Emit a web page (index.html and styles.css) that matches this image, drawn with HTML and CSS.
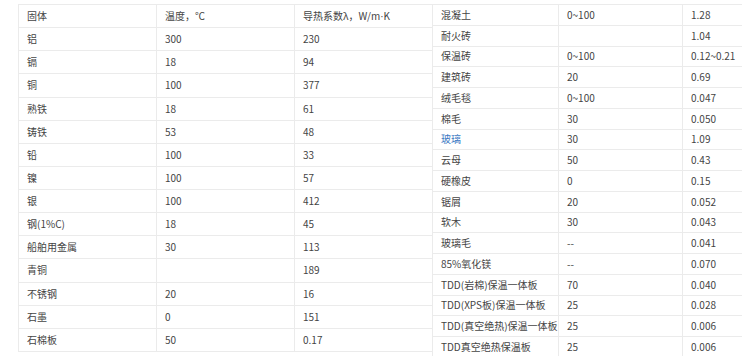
FILE: index.html
```html
<!DOCTYPE html>
<html lang="zh-CN">
<head>
<meta charset="utf-8">
<title>导热系数表</title>
<link rel="stylesheet" href="styles.css">
</head>
<body>
<div class="page">
  <div class="col col-left">
  <table class="tbl tbl-left">
    <colgroup><col class="c1"><col class="c2"><col class="c3"></colgroup>
    <tbody>
      <tr><td>固体</td><td>温度，℃</td><td>导热系数λ，W/m<span class="dot">·</span>K</td></tr>
      <tr><td>铝</td><td>300</td><td>230</td></tr>
      <tr><td>镉</td><td>18</td><td>94</td></tr>
      <tr><td>铜</td><td>100</td><td>377</td></tr>
      <tr><td>熟铁</td><td>18</td><td>61</td></tr>
      <tr><td>铸铁</td><td>53</td><td>48</td></tr>
      <tr><td>铅</td><td>100</td><td>33</td></tr>
      <tr><td>镍</td><td>100</td><td>57</td></tr>
      <tr><td>银</td><td>100</td><td>412</td></tr>
      <tr><td>钢(1%C)</td><td>18</td><td>45</td></tr>
      <tr><td>船舶用金属</td><td>30</td><td>113</td></tr>
      <tr><td>青铜</td><td></td><td>189</td></tr>
      <tr><td>不锈钢</td><td>20</td><td>16</td></tr>
      <tr><td>石墨</td><td>0</td><td>151</td></tr>
      <tr><td>石棉板</td><td>50</td><td>0.17</td></tr>
    </tbody>
  </table>
  </div>
  <div class="col col-right">
  <table class="tbl tbl-right">
    <colgroup><col class="r1"><col class="r2"><col class="r3"></colgroup>
    <tbody>
      <tr><td>混凝土</td><td>0~100</td><td>1.28</td></tr>
      <tr><td>耐火砖</td><td></td><td>1.04</td></tr>
      <tr><td>保温砖</td><td>0~100</td><td>0.12~0.21</td></tr>
      <tr><td>建筑砖</td><td>20</td><td>0.69</td></tr>
      <tr><td>绒毛毯</td><td>0~100</td><td>0.047</td></tr>
      <tr><td>棉毛</td><td>30</td><td>0.050</td></tr>
      <tr><td><a class="link" href="#">玻璃</a></td><td>30</td><td>1.09</td></tr>
      <tr><td>云母</td><td>50</td><td>0.43</td></tr>
      <tr><td>硬橡皮</td><td>0</td><td>0.15</td></tr>
      <tr><td>锯屑</td><td>20</td><td>0.052</td></tr>
      <tr><td>软木</td><td>30</td><td>0.043</td></tr>
      <tr><td>玻璃毛</td><td>--</td><td>0.041</td></tr>
      <tr><td>85%氧化镁</td><td>--</td><td>0.070</td></tr>
      <tr><td>TDD(岩棉)保温一体板</td><td>70</td><td>0.040</td></tr>
      <tr><td>TDD(XPS板)保温一体板</td><td>25</td><td>0.028</td></tr>
      <tr><td>TDD(真空绝热)保温一体板</td><td>25</td><td>0.006</td></tr>
      <tr><td>TDD真空绝热保温板</td><td>25</td><td>0.006</td></tr>
    </tbody>
  </table>
  </div>
</div>
</body>
</html>
```
FILE: styles.css
```css
* { box-sizing: border-box; }
html, body { margin: 0; padding: 0; background: #fff; overflow: hidden; }
.page {
  display: flex;
  align-items: flex-start;
  width: 742px;
  height: 356px;
  padding: 4px 0 0 18px;
  overflow: hidden;
  font-family: "Noto Sans CJK SC", "Liberation Sans", sans-serif;
  font-size: 10px;
  color: #444;
}
.col { flex: none; }
.col-left { width: 414px; }
.col-right { width: 375px; }
.tbl {
  width: 100%;
  border-collapse: separate;
  border-spacing: 0;
  table-layout: fixed;
  border-top: 1px solid #ebebeb;
  border-left: 1px solid #ebebeb;
}
.tbl td {
  padding: 0 0 0 8px;
  border-right: 1px solid #ebebeb;
  border-bottom: 1px solid #ebebeb;
  white-space: nowrap;
  vertical-align: middle;
  text-align: left;
  line-height: 10px;
}
.tbl-left td { height: 23.13px; }
.tbl-left td:last-child { border-right: none; }
.tbl-left .c1 { width: 138px; }
.tbl-left .c2 { width: 138px; }
.tbl-left .c3 { width: 137px; }
.tbl-right td { height: 20.75px; }
.tbl-right .r1 { width: 126px; }
.tbl-right .r2 { width: 124px; }
.tbl-right .r3 { width: 124px; }
.dot { font-family: "Liberation Sans", sans-serif; }
.link { color: #3a78c3; text-decoration: none; }
```
